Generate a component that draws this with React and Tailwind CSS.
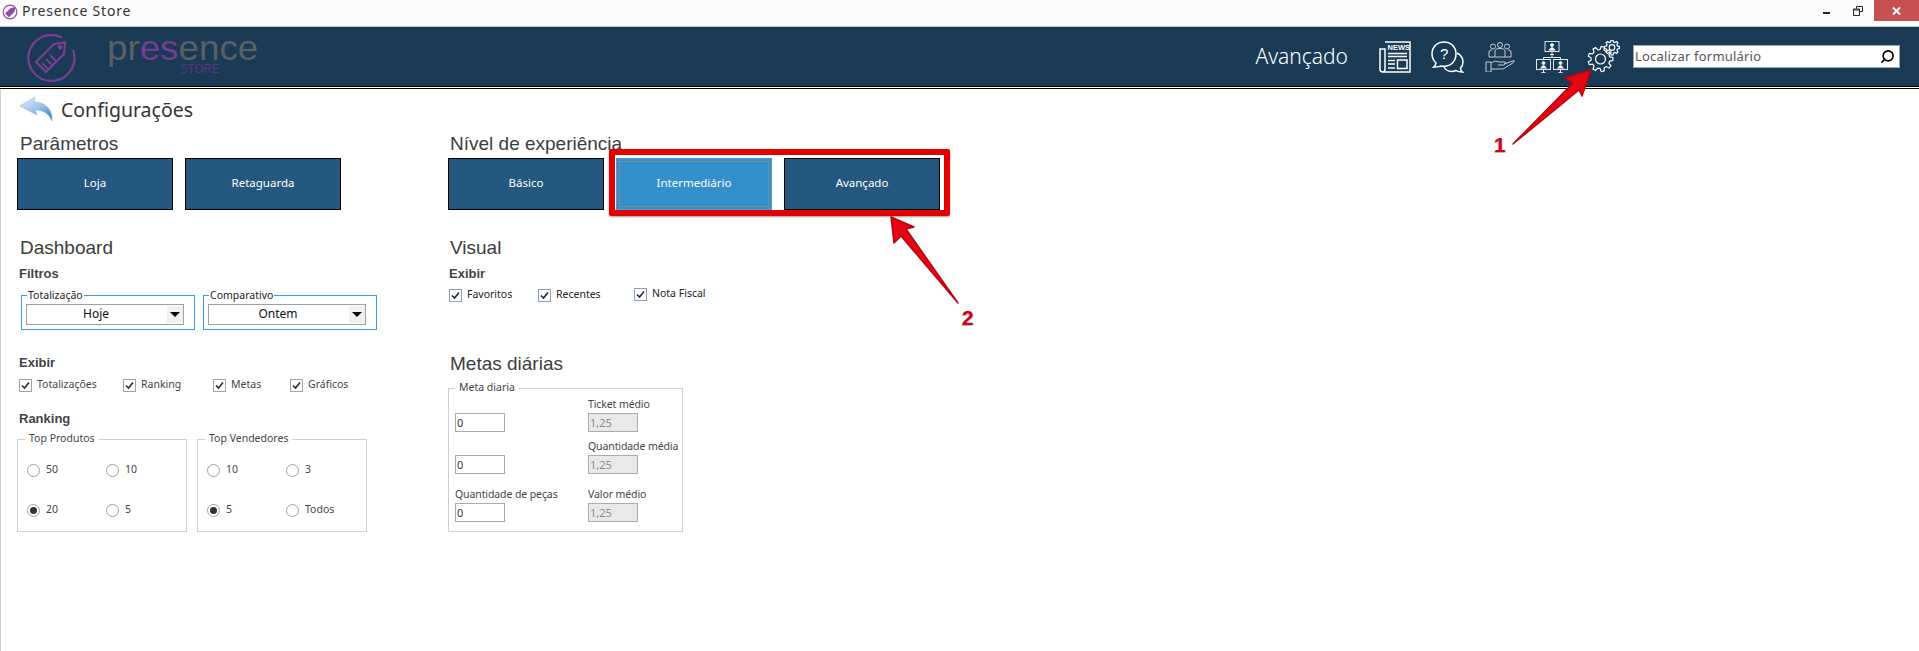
import { Search } from "lucide-react";

const uiFont = "font-['Noto_Sans','Open_Sans',sans-serif]";

// Contorno de engrenagem calculado a partir do número de dentes
function gearPath(cx, cy, outer, inner, teeth) {
  const pts = [];
  const step = (Math.PI * 2) / teeth;
  for (let i = 0; i < teeth; i++) {
    const a = i * step;
    const list = [
      [a - step * 0.32, inner],
      [a - step * 0.17, outer],
      [a + step * 0.17, outer],
      [a + step * 0.32, inner],
    ];
    list.forEach(([t, r]) =>
      pts.push(`${(cx + Math.cos(t) * r).toFixed(2)} ${(cy + Math.sin(t) * r).toFixed(2)}`)
    );
  }
  return `M${pts.join("L")}Z`;
}

function NewsIcon() {
  return (
    <svg width="32" height="32" viewBox="0 0 32 32" fill="none" stroke="white" strokeWidth="1.5">
      <path d="M6 1H31V31H4Q1 31 1 28V8H6V28Q6 31 4 31" />
      <text x="8.5" y="9" fill="white" stroke="none" fontSize="7.5" fontWeight="700" fontFamily="Liberation Sans">NEWS</text>
      <path d="M9 12.5H28M9 15.5H28M9 19.5H16M9 23H16M9 27H16" />
      <rect x="18.5" y="19" width="9.5" height="8.5" />
    </svg>
  );
}

function HelpIcon() {
  return (
    <svg width="33" height="32" viewBox="0 0 33 32" fill="none" stroke="white" strokeWidth="1.5">
      <path d="M13 1C6 1 1 6 1 13C1 17 3 20 5 22C5 24 4 25 2.5 26C6 26.500 8 25.500 10 25C11 25.200 12 25.300 13 25.300C20 25.300 25 20 25 13C25 6 20 1 13 1Z" />
      <path d="M26 12C30 14 32 17 32 21C32 23.500 31 25.500 29.500 27C29.500 28.500 30 30 31.500 31C28.500 31 26.500 30.500 25 29.500C20 31.500 15 30 12.500 25.500" />
      <text x="9" y="18" fill="white" stroke="none" fontSize="15" fontFamily="Liberation Sans">?</text>
    </svg>
  );
}

function TeamIcon() {
  return (
    <svg width="30" height="30" viewBox="0 0 30 30" fill="none" stroke="#c3ccd3" strokeWidth="1">
      <circle cx="15" cy="3" r="2.500" />
      <circle cx="8" cy="4.500" r="2.500" />
      <circle cx="22" cy="4.500" r="2.500" />
      <path d="M10 15V9Q10 6.500 15 6.500Q20 6.500 20 9V15M4 15V10Q4 8 7 8M26 15V10Q26 8 23 8M4 15H26" />
      <path d="M1 20H6V30H1ZM6 21Q10 17.500 14 20H20Q22 21 19 23H13M19 22L29 18.500Q30 19.500 27 21.500L18 27H6" />
    </svg>
  );
}

function Monitor({ x, y, w, h }) {
  return (
    <g>
      <rect x={x} y={y} width={w} height={h - 3} />
      <path d={`M${x + w / 2 - 2} ${y + h}H${x + w / 2 + 2}M${x + w / 2} ${y + h - 3}V${y + h}`} />
      <circle cx={x + w / 2} cy={y + 3.5} r="1.500" fill="white" />
      <path d={`M${x + w / 2 - 3} ${y + h - 4}Q${x + w / 2} ${y + 3} ${x + w / 2 + 3} ${y + h - 4}`} fill="white" />
    </g>
  );
}

function NetworkIcon() {
  return (
    <svg width="32" height="32" viewBox="0 0 32 32" fill="none" stroke="#dfe5ea" strokeWidth="1">
      <Monitor x={9} y={0.5} w={14} h={13} />
      <Monitor x={0.5} y={18.5} w={14} h={13} />
      <Monitor x={17.5} y={18.5} w={14} h={13} />
      <path d="M16 13.500V16.500M7.500 18.500V16.500H24.500V18.500" />
    </svg>
  );
}

function GearsIcon() {
  return (
    <svg width="34" height="33" viewBox="0 0 34 33" fill="none" stroke="white" strokeWidth="1.2">
      <path d={gearPath(14.5, 19, 12.5, 9.5, 9)} />
      <circle cx="14.5" cy="19" r="5" />
      <path d={gearPath(26, 7.5, 7.500, 5.700, 8)} />
      <circle cx="26" cy="7.500" r="2.800" />
    </svg>
  );
}

function Logo() {
  return (
    <div className="flex h-full items-center">
      <svg width="50" height="50" viewBox="0 0 50 50" fill="none" stroke="#7a3f95" strokeWidth="2.200" className="ml-[26px]">
        <path d="M36 5.500A23 23 0 1 0 47 18" />
        <path d="M11 33L29 15L40 13.500L39 25L21 43Z" transform="translate(-1 -3)" />
        <circle cx="34" cy="15" r="1.300" />
        <path d="M16 31L23 38M20 27L27 34M24 23L31 30" strokeWidth="1.800" />
      </svg>
      <div className="mt-[6px] ml-[31px] w-[152px] self-start font-['Liberation_Sans',sans-serif]">
        <span className="block origin-left scale-x-[1.05] text-[35px] leading-[30px] text-[#5c5f63]">
          pr<span className="text-[#763c92]">es</span>ence
        </span>
        <span className="ml-[73px] block origin-left scale-x-[0.85] text-[13.5px] leading-[11px] text-[#5a3480]">
          STORE
        </span>
      </div>
    </div>
  );
}

function TitleBar() {
  return (
    <div className="flex h-[27px] items-start border-b border-[#c9c9c9] bg-[#fcfcfc]">
      <svg width="16" height="16" viewBox="0 0 16 16" fill="none" stroke="#8c4aa8" strokeWidth="1.200" className="mt-[4px] ml-[2px]">
        <circle cx="8" cy="8" r="6.800" />
        <path d="M4 9.500L9 4.500L12.500 4L12 7.500L7 12.500Z" fill="#8c4aa8" />
      </svg>
      <span className={`${uiFont} ml-[4px] text-[14px] leading-[22px] tracking-[0.8px] text-[#333]`}>Presence Store</span>
      <div className="ml-auto flex h-[21px]">
        <div className="flex w-[32px] items-center justify-center pt-[5px]">
          <div className="h-[2px] w-[7px] bg-[#222]" />
        </div>
        <div className="flex w-[32px] items-center justify-center">
          <svg width="10" height="10" viewBox="0 0 10 10" fill="none" stroke="#222" strokeWidth="1">
            <path d="M3.500 2.500V0.500H9.500V5.500H7M0.500 3H6.500V9.500H0.500ZM0.500 4H6.500" />
          </svg>
        </div>
        <div className="flex w-[45px] items-center justify-center bg-[#c75050]">
          <svg width="9" height="8" viewBox="0 0 9 8" fill="none" stroke="white" strokeWidth="2">
            <path d="M1 0.500L8 7.500M8 0.500L1 7.500" />
          </svg>
        </div>
      </div>
    </div>
  );
}

function Header() {
  return (
    <div className="border-b border-black pb-[1px]">
      <div className="flex h-[60px] items-center border-b border-black bg-[#1a3a56]">
        <Logo />
        <span className={`${uiFont} ml-auto text-[21px] font-light text-white`}>Avançado</span>
        <div className="ml-[31px] flex items-center">
          <NewsIcon />
          <div className="ml-[20px]"><HelpIcon /></div>
          <div className="ml-[21px]"><TeamIcon /></div>
          <div className="ml-[21px]"><NetworkIcon /></div>
          <div className="ml-[18px]"><GearsIcon /></div>
        </div>
        <div className="mr-[19px] ml-[13px] flex h-[23px] w-[267px] items-center border border-[#9aa8b4] bg-white">
          <span className={`${uiFont} ml-[1px] text-[13px] tracking-[0.2px] text-[#555]`}>Localizar formulário</span>
          <Search size={15} strokeWidth={2.5} className="mr-[4px] ml-auto -scale-x-100 text-black" />
        </div>
      </div>
    </div>
  );
}

function Heading({ children, className = "" }) {
  return (
    <h2 className={`h-[20px] pl-[3px] font-['Liberation_Sans',sans-serif] text-[19px] leading-[20px] text-[#3d3d3d] ${className}`}>
      {children}
    </h2>
  );
}

function SubHeading({ children, className = "" }) {
  return (
    <h3 className={`h-[16px] pl-[2px] font-['Liberation_Sans',sans-serif] text-[13px] leading-[16px] font-bold text-[#444] ${className}`}>
      {children}
    </h3>
  );
}

function BlueButton({ children, width, active }) {
  return (
    <div
      className={`${uiFont} flex h-[52px] ${width} items-center justify-center pb-[2px] text-[11.5px] text-white ${
        active
          ? "border border-[#4a9fe0] bg-[#338fc9] outline-1 -outline-offset-4 outline-[#c98a4a] outline-dotted"
          : "border border-black bg-[#25587f]"
      }`}
    >
      {children}
    </div>
  );
}

function Check({ label, width, blue, className = "" }) {
  return (
    <div className={`flex h-[16px] items-center ${width} ${className}`}>
      <div className={`flex h-[13px] w-[13px] items-center justify-center border bg-white ${blue ? "border-[#8aa0b8]" : "border-[#a3a3a3]"}`}>
        <svg width="9" height="9" viewBox="0 0 9 9" fill="none" stroke="#2a2a2a" strokeWidth="1.600">
          <path d="M1 4.500L3.500 7L8 1.500" />
        </svg>
      </div>
      <span className={`${uiFont} ml-[5px] -mt-[2px] text-[10.5px] leading-[14px] ${blue ? "text-[#222]" : "text-[#444]"}`}>{label}</span>
    </div>
  );
}

function Radio({ label, checked }) {
  return (
    <div className="flex h-[16px] items-center">
      <div className="flex h-[13px] w-[13px] items-center justify-center rounded-full border border-[#a0a0a0] bg-white">
        {checked && <div className="h-[7px] w-[7px] rounded-full bg-[#333]" />}
      </div>
      <span className={`${uiFont} ml-[6px] -mt-[2px] text-[10.5px] leading-[14px] text-[#444]`}>{label}</span>
    </div>
  );
}

function RadioGroup({ title, items }) {
  return (
    <div className="relative h-[93px] w-[170px] border border-[#cfcfcf] pt-[22px] pl-[9px]">
      <span className={`${uiFont} absolute -top-[9px] left-[7px] bg-white px-[4px] text-[10.5px] leading-[14px] text-[#444]`}>{title}</span>
      <div className="grid grid-cols-[79px_79px] gap-y-[24px]">
        {items.map((it) => (
          <Radio key={it.label} label={it.label} checked={it.checked} />
        ))}
      </div>
    </div>
  );
}

function FilterBox({ title, value }) {
  return (
    <div className="relative h-[35px] w-[174px] border border-[#3399ff] pt-[8px] pl-[4px]">
      <span className={`${uiFont} absolute -top-[8px] left-[5px] bg-white px-[1px] text-[10.5px] leading-[14px] text-[#222]`}>{title}</span>
      <div className="flex h-[21px] w-[158px] items-center border border-[#a0a0a0] bg-white">
        <span className={`${uiFont} -mt-[2px] flex-1 pr-[2px] text-center text-[12px] leading-[16px] text-[#111]`}>{value}</span>
        <div className="flex h-[17px] w-[16px] items-center justify-center bg-[#f0f0f0]">
          <div className="h-0 w-0 border-x-[5px] border-t-[5px] border-x-transparent border-t-black" />
        </div>
      </div>
    </div>
  );
}

function MetaField({ label, value, disabled, className = "" }) {
  return (
    <div className={className}>
      {label && <div className={`${uiFont} h-[15px] text-[10.5px] leading-[13px] tracking-[-0.1px] whitespace-nowrap text-[#444]`}>{label}</div>}
      <input
        readOnly
        value={value}
        className={`${uiFont} block h-[19px] w-[50px] border px-[1px] text-[11px] outline-none ${
          disabled ? "border-[#ababab] bg-[#e9e9e9] text-[#8a8a8a]" : "border-[#ababab] bg-white text-[#333]"
        }`}
      />
    </div>
  );
}

function LeftColumn() {
  return (
    <div className="w-[430px]">
      <Heading className="mt-[12px]">Parâmetros</Heading>
      <div className="mt-[4px] flex gap-[12px]">
        <BlueButton width="w-[156px]">Loja</BlueButton>
        <BlueButton width="w-[156px]">Retaguarda</BlueButton>
      </div>

      <Heading className="mt-[28px]">Dashboard</Heading>
      <SubHeading className="mt-[8px]">Filtros</SubHeading>
      <div className="mt-[13px] ml-[4px] flex gap-[8px]">
        <FilterBox title="Totalização" value="Hoje" />
        <FilterBox title="Comparativo" value="Ontem" />
      </div>

      <SubHeading className="mt-[25px]">Exibir</SubHeading>
      <div className="mt-[6px] ml-[2px] flex">
        <Check label="Totalizações" width="w-[104px]" />
        <Check label="Ranking" width="w-[90px]" />
        <Check label="Metas" width="w-[77px]" />
        <Check label="Gráficos" width="w-[90px]" />
      </div>

      <SubHeading className="mt-[18px]">Ranking</SubHeading>
      <div className="mt-[12px] flex gap-[10px]">
        <RadioGroup
          title="Top Produtos"
          items={[{ label: "50" }, { label: "10" }, { label: "20", checked: true }, { label: "5" }]}
        />
        <RadioGroup
          title="Top Vendedores"
          items={[{ label: "10" }, { label: "3" }, { label: "5", checked: true }, { label: "Todos" }]}
        />
      </div>
    </div>
  );
}

function RightColumn() {
  return (
    <div className="w-[520px] pl-[1px]">
      <Heading className="mt-[12px] -ml-[1px]">Nível de experiência</Heading>
      <div className="mt-[4px] flex">
        <BlueButton width="w-[156px]">Básico</BlueButton>
        <div className="ml-[12px]"><BlueButton width="w-[156px]" active>Intermediário</BlueButton></div>
        <div className="ml-[12px]"><BlueButton width="w-[156px]">Avançado</BlueButton></div>
      </div>

      <Heading className="mt-[28px] -ml-[1px]">Visual</Heading>
      <SubHeading className="mt-[8px] -ml-[1px]">Exibir</SubHeading>
      <div className="mt-[5px] ml-[1px] flex">
        <Check label="Favoritos" width="w-[89px]" blue />
        <Check label="Recentes" width="w-[96px]" blue />
        <Check label="Nota Fiscal" width="w-[90px]" blue className="-mt-[1px]" />
      </div>

      <Heading className="mt-[51px] -ml-[1px]">Metas diárias</Heading>
      <div className="relative mt-[14px] h-[144px] w-[235px] border border-[#cfcfcf] pl-[6px]">
        <span className={`${uiFont} absolute -top-[9px] left-[6px] bg-white px-[4px] text-[10.5px] leading-[14px] text-[#444]`}>Meta diaria</span>
        <div className="grid grid-cols-[133px_60px] grid-rows-[43px_42px_48px] items-end">
          <MetaField value="0" />
          <MetaField label="Ticket médio" value="1,25" disabled />
          <MetaField value="0" />
          <MetaField label="Quantidade média" value="1,25" disabled />
          <MetaField label="Quantidade de peças" value="0" />
          <MetaField label="Valor médio" value="1,25" disabled />
        </div>
      </div>
    </div>
  );
}

// Setas vermelhas e números da anotação, por cima da tela
function Annotations() {
  return (
    <>
      <svg width="1919" height="651" viewBox="0 0 1919 651" className="pointer-events-none absolute top-0 left-0">
        <path d="M1513 144L1573 83L1565 78L1591 70L1582 96L1579 90Z" fill="#e30613" stroke="#c00010" strokeWidth="1.500" strokeLinejoin="round" />
        <path d="M958 303L901 236L894 243L891 217L914 227L906 229Z" fill="#e30613" stroke="#c00010" strokeWidth="1.500" strokeLinejoin="round" />
      </svg>
      <div className="pointer-events-none absolute top-[149px] left-[609px] h-[67px] w-[341px] rounded-[2px] border-[6px] border-[#e30000] shadow-[0_1px_2px_rgba(0,0,0,0.4)]" />
      <span className="absolute top-[133px] left-[1494px] font-['Liberation_Sans',sans-serif] text-[21px] leading-[24px] font-bold text-[#d40012] [text-shadow:-1px_1px_0_#bbb,1px_1px_0_#ddd]">1</span>
      <span className="absolute top-[306px] left-[962px] font-['Liberation_Sans',sans-serif] text-[21px] leading-[24px] font-bold text-[#d40012] [text-shadow:-1px_1px_0_#bbb,1px_1px_0_#ddd]">2</span>
    </>
  );
}

export default function App() {
  return (
    <div className="relative h-[651px] w-full overflow-hidden bg-white">
      <TitleBar />
      <Header />
      <div className="h-[562px] border-l border-[#cfcfcf] pl-[16px]">
        <div className="flex items-center pt-[8px] pl-[3px]">
          <svg width="33" height="25" viewBox="0 0 33 25">
            <defs>
              <linearGradient id="voltar" x1="0" y1="0" x2="0.7" y2="1">
                <stop offset="0" stopColor="#e3f0fb" />
                <stop offset="0.55" stopColor="#9cc6ee" />
                <stop offset="1" stopColor="#3f86cc" />
              </linearGradient>
            </defs>
            <path d="M0 9L15 0L14 5C25 5 33 12 32 24C29 17 24 13 15 13L17 18Z" fill="url(#voltar)" stroke="#8fb6dc" strokeWidth="0.600" />
          </svg>
          <span className={`${uiFont} ml-[8px] text-[19.5px] leading-[24px] text-[#333]`}>Configurações</span>
        </div>
        <div className="flex">
          <LeftColumn />
          <RightColumn />
        </div>
      </div>
      <Annotations />
    </div>
  );
}
